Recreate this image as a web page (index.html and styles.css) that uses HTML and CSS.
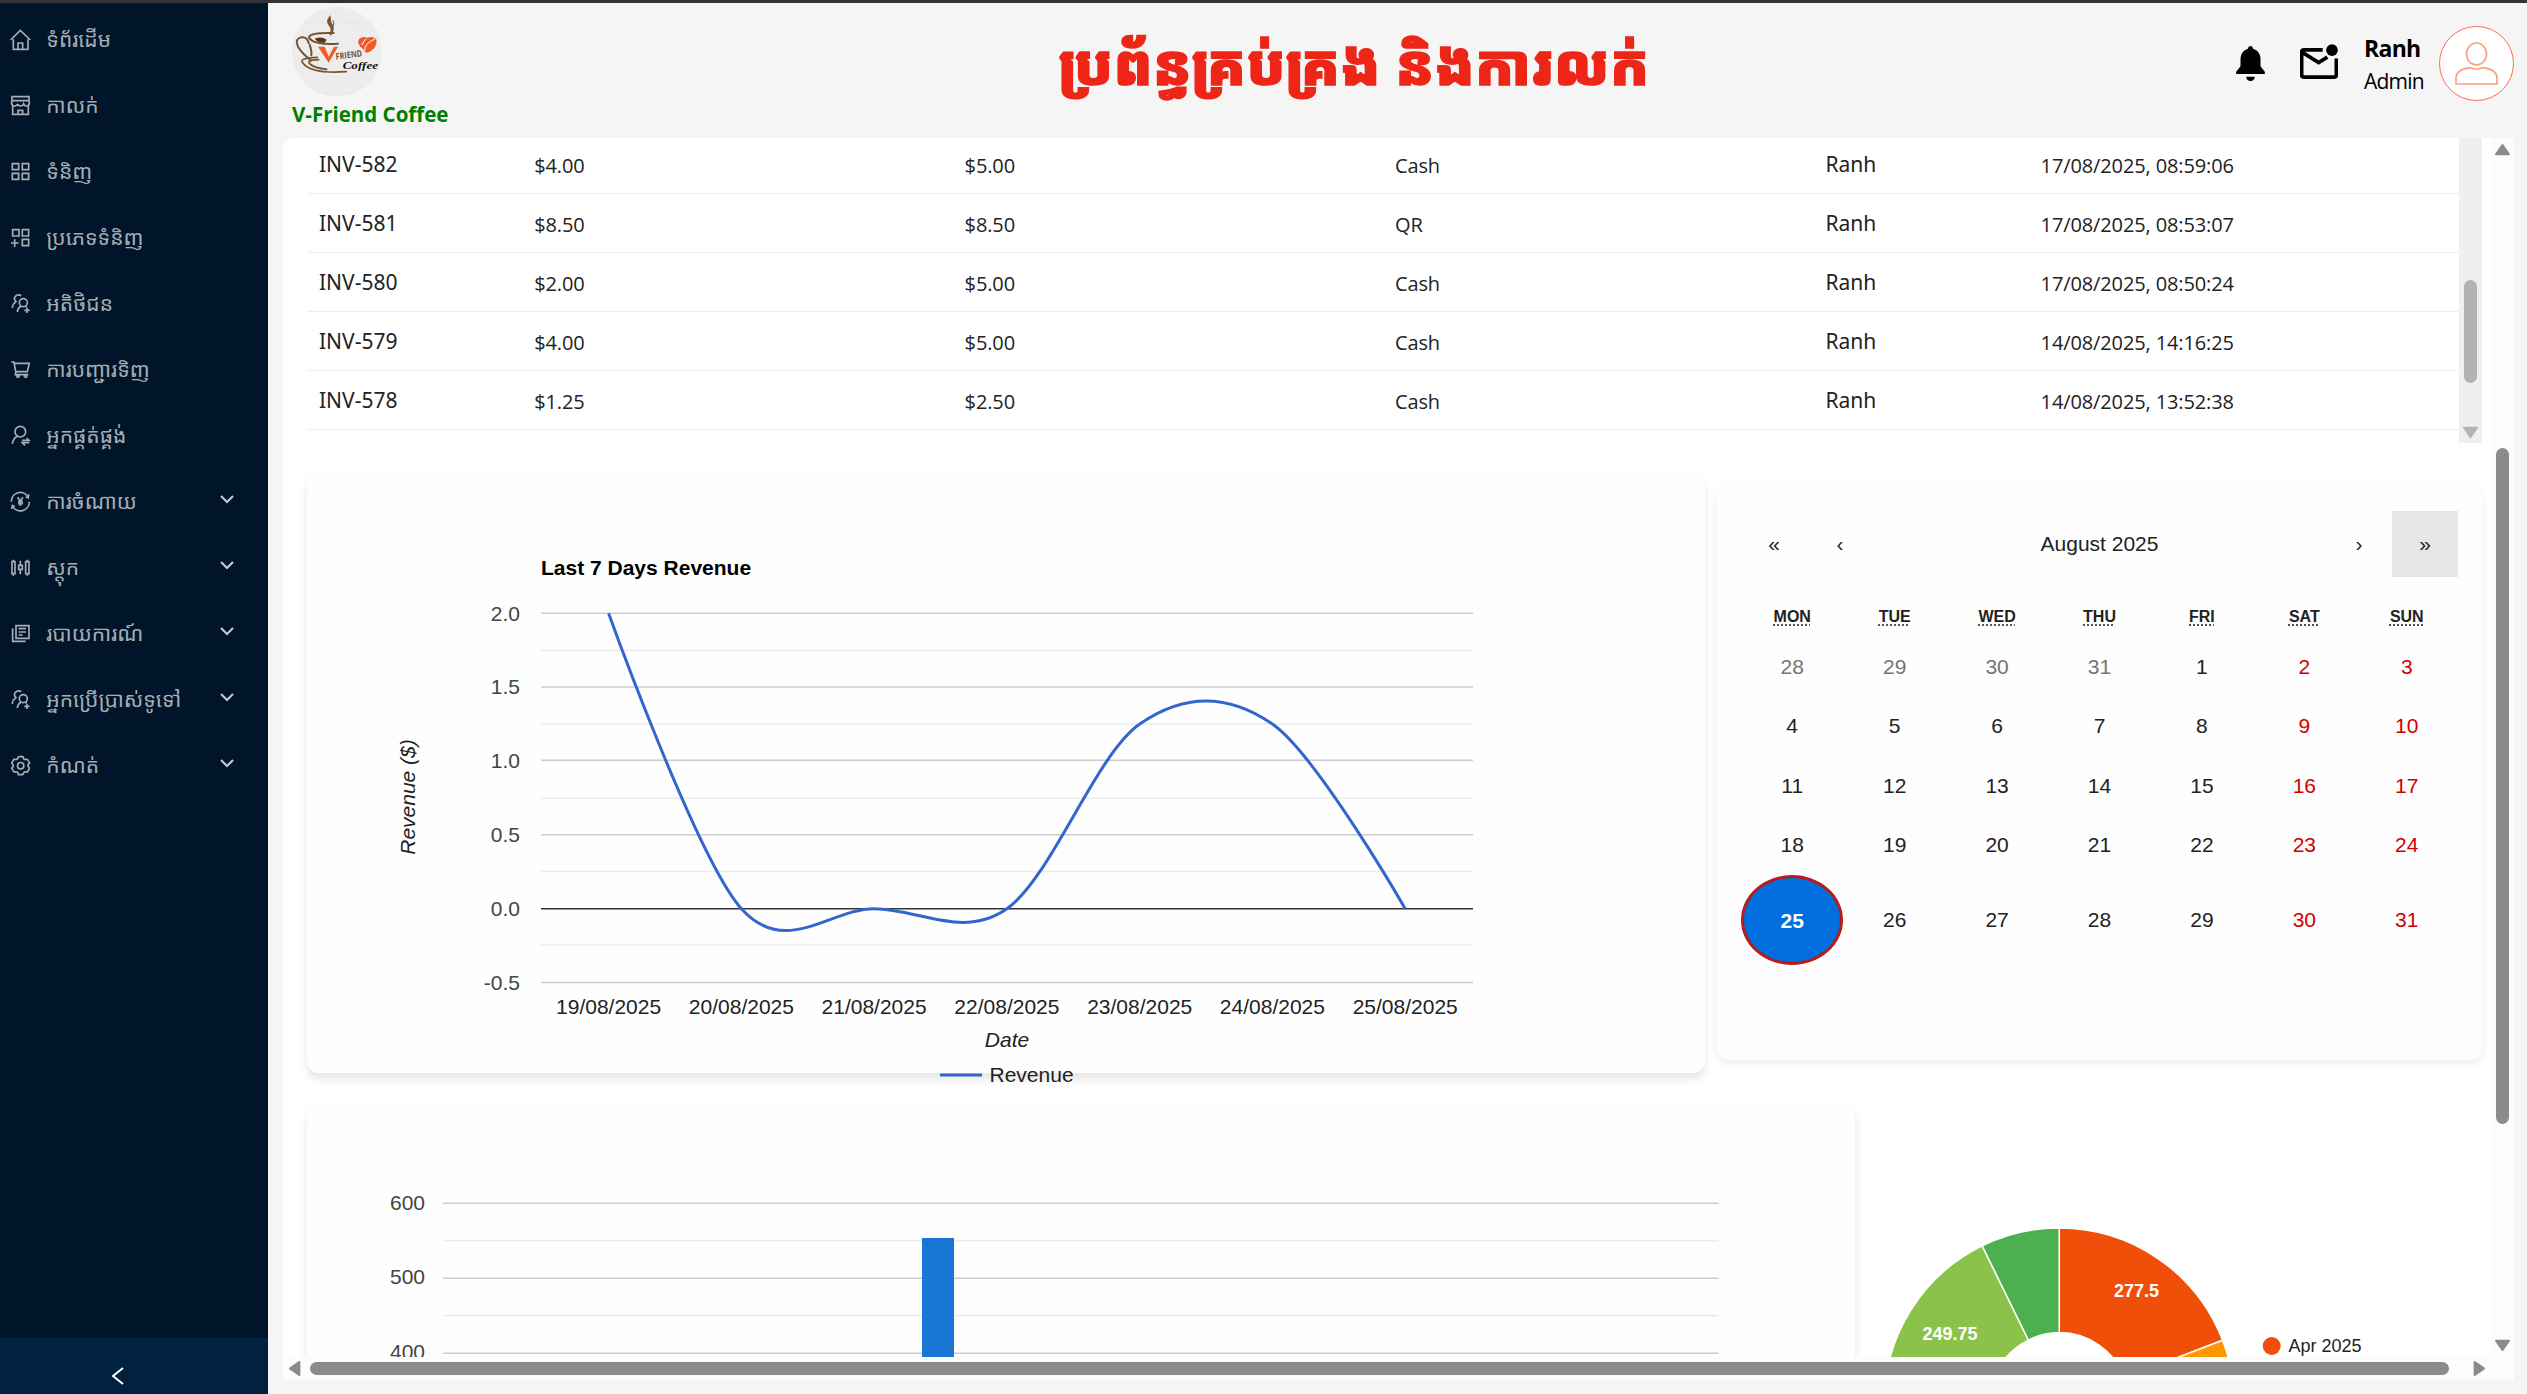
FILE: index.html
```html
<!DOCTYPE html>
<html lang="km">
<head>
<meta charset="utf-8">
<title>V-Friend Coffee</title>
<link rel="stylesheet" href="styles.css">
</head>
<body>
<svg class="defs" aria-hidden="true">
  <symbol id="users" viewBox="30 879 64 64"><circle cx="70" cy="908" r="12"/><path d="M37 924q1-13 11-19q-8-8-2-16q8-8 18-2M52 936q1-12 11-17M76 918l4 4M81 923v16M73 931h16"/></symbol>
  <symbol id="down" viewBox="0 0 14 10"><path d="M1 2l6 6 6-6"/></symbol>
  <symbol id="tooth" overflow="visible"><path d="M-6.8-27.2L6.8-27.2L8.5-21L13-18.4L20.2-19.5"/></symbol>
</svg>
<div class="topline"></div>
<div class="app">
  <aside class="sidebar">
    <nav class="menu">
      <a class="item"><svg class="icon" viewBox="30 87 64 64"><path d="M32 120L61 91l30 29M40 118v30h44v-30M54 148v-19h14v19"/></svg><span>ទំព័រដើម</span></a>
      <a class="item"><svg class="icon" viewBox="30 285 64 64"><path d="M36 290h51v12H36zM35 302v8q1 8 9 8q8 0 9-6q2 6 9 6q7 0 9-6q2 6 8 6q8 0 9-8v-8M38 318v25h47v-25M54 343v-12h14v12"/></svg><span>កាលក់</span></a>
      <a class="item"><svg class="icon" viewBox="30 483 64 64"><path d="M37 491h19v18H37zM67 491h19v18H67zM37 520h19v18H37zM67 520h19v18H67z"/></svg><span>ទំនិញ</span></a>
      <a class="item"><svg class="icon" viewBox="30 681 64 64"><path d="M38 689h19v19H38zM67 689h19v19H67zM67 718h19v19H67zM44 718v23M33 729h23"/></svg><span>ប្រភេទទំនិញ</span></a>
      <a class="item"><svg class="icon"><use href="#users"/></svg><span>អតិថិជន</span></a>
      <a class="item"><svg class="icon" viewBox="30 1078 64 64"><path d="M34 1087h8l5 29h35l6-25H44M48 1116l-2 9h39"/><circle cx="54" cy="1129" r="4"/><circle cx="77" cy="1129" r="4"/></svg><span>ការបញ្ជារទិញ</span></a>
      <a class="item"><svg class="icon" viewBox="30 75 64 64"><circle cx="61" cy="95" r="16"/><path d="M37 132q2-17 16-24M66 121h21l-7-7M88 128H67l8 8"/></svg><span>អ្នកផ្គត់ផ្គង់</span></a>
      <a class="item"><svg class="icon" viewBox="30 273 64 64"><path d="M34 305a27 27 0 0 1 51-13l2-9M88 305a27 27 0 0 1-51 13l-2 9M77 292h9M37 318h8M53 292l8 12 8-12M61 304v14M54 305h15M54 311h15"/></svg><span>ការចំណាយ</span><svg class="chev"><use href="#down"/></svg></a>
      <a class="item"><svg class="icon" viewBox="30 471 64 64"><path d="M36 485h9v36h-9zM40 479v6M40 521v6M77 485h10v36H77zM82 479v6M82 521v6M56 496h11v12H56zM61 482v14M61 508v15"/></svg><span>ស្តុក</span><svg class="chev"><use href="#down"/></svg></a>
      <a class="item"><svg class="icon" viewBox="30 669 64 64"><path d="M48 677h39v38H48zM38 685v39h39M56 686h22M56 696h22M56 705h12"/></svg><span>របាយការណ៍</span><svg class="chev"><use href="#down"/></svg></a>
      <a class="item"><svg class="icon"><use href="#users"/></svg><span>អ្នកប្រើប្រាស់ទូទៅ</span><svg class="chev"><use href="#down"/></svg></a>
      <a class="item"><svg class="icon" viewBox="-32 -32 64 64"><circle r="9.5"/><use href="#tooth"/><use href="#tooth" transform="rotate(60)"/><use href="#tooth" transform="rotate(120)"/><use href="#tooth" transform="rotate(180)"/><use href="#tooth" transform="rotate(240)"/><use href="#tooth" transform="rotate(300)"/></svg><span>កំណត់</span><svg class="chev"><use href="#down"/></svg></a>
    </nav>
    <div class="trigger"><svg viewBox="0 0 12 18"><path d="M11 1L1 9l10 8"/></svg></div>
  </aside>

  <div class="main">
    <header class="header">
      <div class="brand">
        <svg class="logo" viewBox="0 0 270 270">
          <circle cx="135" cy="135" r="135" fill="#ededed"/>
          <g fill="none" stroke="#e3e4e4" stroke-width="2"><path d="M70 20h130M35 48h200M20 80h50M180 72h80M5 110h30M5 150h30M8 180h60M120 212h125M50 236h170M90 258h90M75 22v26M150 22v26M205 48v24M45 80v30M100 212v24M165 212v24M205 180v32"/></g>
          <g fill="none" stroke="#7b5230" stroke-width="6" stroke-linecap="round">
            <path d="M116 82q8-16-4-29q-8-11 1-21q0 14 7 23q6 12-4 27"/>
            <path d="M124 58q4-8-1-18" stroke-width="3"/>
            <path d="M125 78q-66-2-73 10q-3 6 8 12M56 98q20 16 82 12"/>
            <path d="M50 108q-4-20-23-17q-20 6-9 28q10 18 40 42M58 145q2-10-5-32"/>
            <path d="M76 151q-56 2-44 16q24 34 131 27M80 158q-40 2-26 13q14 12 50 16" stroke-width="5"/>
          </g>
          <path d="M68 95q20-8 36 3l-6 9q-20 2-30-12z" fill="#54351f"/>
          <path d="M78 119h20l12 30 16-30h12l-28 48z" fill="#f15a29"/>
          <text class="logo-friend" x="132" y="158" transform="rotate(-7 132 158)" textLength="80" lengthAdjust="spacingAndGlyphs">FRIEND</text>
          <text class="logo-coffee" x="152" y="185" textLength="106" lengthAdjust="spacingAndGlyphs">Coffee</text>
          <path d="M213 126q-20-14-12-30q10-10 24-4q22-6 29 7q1 28-28 38q-8 0-13-11z" fill="#f15a29"/>
          <path d="M218 132q-2-22 31-36M210 114q4-12 12-18" stroke="#fff" stroke-width="3" fill="none"/>
        </svg>
        <div class="brand-name">V-Friend Coffee</div>
      </div>
      <h1 class="title">ប្រព័ន្ធគ្រប់គ្រង និងការលក់</h1>
      <div class="account">
        <svg class="bell" viewBox="0 0 86 106"><path d="M43 0q7 1 8 8q21 7 22 29v24l13 16v7H0v-7l13-16V37q1-22 22-29q1-7 8-8zM30 92h26q-2 13-13 13t-13-13z"/></svg>
        <svg class="mail" viewBox="0 0 114 104"><path d="M68 17H12q-7 0-7 7v68q0 7 7 7h90q7 0 7-7V43M6 24l50 31 26-16" fill="none" stroke="#000" stroke-width="11"/><circle cx="96" cy="18" r="17.500"/></svg>
        <div class="who"><b>Ranh</b><span>Admin</span></div>
        <svg class="avatar" viewBox="0 0 225 225"><circle cx="112.500" cy="112.500" r="111" fill="#fff"/><ellipse cx="112.500" cy="84" rx="30" ry="33"/><path d="M51 174v-20q2-24 43-29q18 8 37 0q41 5 43 29v20z"/></svg>
      </div>
    </header>

    <section class="panel">
      <div class="view">
        <div class="tablewrap">
          <div class="rows">
            <div class="row"><span class="n">INV-582</span><span>$4.00</span><span>$5.00</span><span>Cash</span><span class="n">Ranh</span><span>17/08/2025, 08:59:06</span></div>
            <div class="row"><span class="n">INV-581</span><span>$8.50</span><span>$8.50</span><span>QR</span><span class="n">Ranh</span><span>17/08/2025, 08:53:07</span></div>
            <div class="row"><span class="n">INV-580</span><span>$2.00</span><span>$5.00</span><span>Cash</span><span class="n">Ranh</span><span>17/08/2025, 08:50:24</span></div>
            <div class="row"><span class="n">INV-579</span><span>$4.00</span><span>$5.00</span><span>Cash</span><span class="n">Ranh</span><span>14/08/2025, 14:16:25</span></div>
            <div class="row"><span class="n">INV-578</span><span>$1.25</span><span>$2.50</span><span>Cash</span><span class="n">Ranh</span><span>14/08/2025, 13:52:38</span></div>
          </div>
          <div class="vbar light"><i class="thumb"></i><svg class="arrow" viewBox="0 0 14 11"><path d="M1 1.500h12L7 10z"/></svg></div>
        </div>

        <div class="cards">
          <div class="card line">
            <svg class="linechart" viewBox="307 472 1398 640">
              <g class="minor"><path d="M541 650.500H1473M541 724H1473M541 798H1473M541 871.500H1473M541 945H1473"/></g>
              <g class="major"><path d="M541 613.300H1473M541 687H1473M541 760.200H1473M541 834.700H1473M541 982.400H1473"/></g>
              <path class="zero" d="M541 908.700H1473"/>
              <path class="curve" d="M608.600 613.300C608.600 613.300 697.100 859.500 741.400 908.700C785.600 957.900 829.900 908.700 874.100 908.700C918.400 908.700 962.700 939.500 1006.900 908.700C1051.200 877.900 1095.400 754.900 1139.700 724.100C1183.900 693.300 1228.200 693.300 1272.400 724.100C1316.700 754.900 1405.200 908.700 1405.200 908.700"/>
              <text class="ct" x="541" y="575">Last 7 Days Revenue</text>
              <g class="yl"><text x="520" y="620.500">2.0</text><text x="520" y="694">1.5</text><text x="520" y="768">1.0</text><text x="520" y="842">0.5</text><text x="520" y="916">0.0</text><text x="520" y="990">-0.5</text></g>
              <g class="xl"><text x="608.600" y="1014">19/08/2025</text><text x="741.400" y="1014">20/08/2025</text><text x="874.100" y="1014">21/08/2025</text><text x="1006.900" y="1014">22/08/2025</text><text x="1139.700" y="1014">23/08/2025</text><text x="1272.400" y="1014">24/08/2025</text><text x="1405.200" y="1014">25/08/2025</text>
              <text class="it" x="1007" y="1047">Date</text><text class="it" transform="translate(415 797) rotate(-90)">Revenue ($)</text></g>
              <path class="key" d="M940 1075H982"/><text class="kt" x="989.500" y="1082">Revenue</text>
            </svg>
          </div>
          <div class="card cal">
            <div class="calnav"><span>«</span><span>‹</span><span class="month">August 2025</span><span>›</span><span class="hover">»</span></div>
            <div class="week"><abbr title="Monday">MON</abbr><abbr title="Tuesday">TUE</abbr><abbr title="Wednesday">WED</abbr><abbr title="Thursday">THU</abbr><abbr title="Friday">FRI</abbr><abbr title="Saturday">SAT</abbr><abbr title="Sunday">SUN</abbr></div>
            <div class="days">
              <span class="out">28</span><span class="out">29</span><span class="out">30</span><span class="out">31</span><span>1</span><span class="off">2</span><span class="off">3</span>
              <span>4</span><span>5</span><span>6</span><span>7</span><span>8</span><span class="off">9</span><span class="off">10</span>
              <span>11</span><span>12</span><span>13</span><span>14</span><span>15</span><span class="off">16</span><span class="off">17</span>
              <span>18</span><span>19</span><span>20</span><span>21</span><span>22</span><span class="off">23</span><span class="off">24</span>
              <span class="today">25</span><span>26</span><span>27</span><span>28</span><span>29</span><span class="off">30</span><span class="off">31</span>
            </div>
          </div>
        </div>

        <div class="cards second">
          <div class="card bars">
            <svg class="fill" viewBox="307 1103 1548 300">
              <g class="minor"><path d="M443 1240.500H1718.500M443 1315.500H1718.500"/></g>
              <g class="major"><path d="M443 1203.200H1718.500M443 1278.200H1718.500M443 1353.200H1718.500"/></g>
              <rect x="922" y="1238" width="32" height="165" fill="#1976d2"/>
              <g class="yl"><text x="425" y="1210">600</text><text x="425" y="1284">500</text><text x="425" y="1359">400</text></g>
            </svg>
          </div>
          <div class="donut">
            <svg class="fill" viewBox="1855 1103 627 300">
              <g class="slices">
                <path fill="#f04f0a" d="M2059.200 1228A175 175 0 0 1 2222.600 1340.300L2124.600 1377.900A70 70 0 0 0 2059.200 1332.500Z"/>
                <path fill="#ff9800" d="M2222.600 1340.300A175 175 0 0 1 2234.200 1403H2129.200A70 70 0 0 0 2124.600 1377.900Z"/>
                <path fill="#8bc34a" d="M1884.200 1403A175 175 0 0 1 1982.200 1245.800L2028.400 1340.100A70 70 0 0 0 1989.200 1403Z"/>
                <path fill="#4caf50" d="M1982.200 1245.800A175 175 0 0 1 2059.200 1228V1332.500A70 70 0 0 0 2028.400 1340.100Z"/>
              </g>
              <text class="sl" x="2136.500" y="1297">277.5</text><text class="sl" x="1950" y="1340">249.75</text>
              <circle cx="2271.700" cy="1346" r="9" fill="#f04f0a"/><text class="dl" x="2288.500" y="1352">Apr 2025</text>
            </svg>
          </div>
        </div>
      </div>
      <div class="vbar"><svg class="arrow" viewBox="0 0 14 11"><path d="M1 9.500h12L7 1z"/></svg><i class="thumb"></i><svg class="arrow" viewBox="0 0 14 11"><path d="M1 1.500h12L7 10z"/></svg></div>
      <div class="hbar"><svg class="arrow" viewBox="0 0 11 14"><path d="M9.500 1v12L1 7z"/></svg><i class="thumb"></i><svg class="arrow" viewBox="0 0 11 14"><path d="M1.500 1v12L10 7z"/></svg></div>
    </section>
  </div>
</div>
</body>
</html>
```
FILE: styles.css
```css
* { box-sizing: border-box; }
html, body { margin: 0; height: 1394px; overflow: hidden; }
body { background: #f5f5f5; font-family: "Open Sans", "Noto Sans", sans-serif; color: #000; }
.defs { display: none; }
.topline { height: 3px; background: #333238; }
.app { display: flex; height: 1391px; }

.sidebar { width: 268px; background: #001529; display: flex; flex-direction: column; overflow: hidden; }
.menu { display: flex; flex-direction: column; padding-top: 4px; flex: 1; }
.item { height: 66px; flex: none; display: flex; align-items: center; padding: 0 34px 0 10px; color: #a6adb4; font: 21px/30px "Noto Sans Khmer", "Noto Sans", sans-serif; white-space: nowrap; }
.item span { margin-left: 15px; flex: 1; padding-bottom: 2px; }
.icon { width: 21.300px; height: 21.300px; flex: none; fill: none; stroke: #a6adb4; stroke-width: 5; }
.chev { width: 14px; height: 10px; fill: none; stroke: #c3c8cc; stroke-width: 2.200; margin-bottom: 6px; }
.trigger { height: 56px; flex: none; background: #002140; display: flex; justify-content: center; padding: 29px 32px 0 0; }
.trigger svg { width: 12px; height: 18px; fill: none; stroke: #fff; stroke-width: 2; }

.main { flex: 1; display: flex; flex-direction: column; padding: 0 13px 14px 15px; }
.header { height: 135px; display: grid; grid-template-columns: 776px 590px 1fr; }
.brand { padding: 4px 0 0 9px; }
.logo { width: 90px; height: 90px; display: block; }
.brand-name { font-weight: 700; font-size: 20.500px; line-height: 30px; margin-top: 2px; color: #008000; white-space: nowrap; }
.title { margin: 0; padding-top: 18px; font: 900 56px/84px "Khmer OS Muol", "Noto Sans Khmer", "Noto Sans", sans-serif; color: #ed2618; white-space: nowrap; text-align: center; -webkit-text-stroke: 1.500px #ed2618; }
.account { display: flex; justify-content: flex-end; align-items: flex-start; padding-top: 23px; }
.bell { width: 29px; height: 35.300px; margin: 20px 35px 0 0; }
.mail { width: 38px; height: 35px; margin: 18px 26px 0 0; }
.who { width: 75px; display: flex; flex-direction: column; line-height: 32px; padding-top: 5px; }
.who b { font-size: 23px; letter-spacing: -.7px; line-height: 34px; }
.who span { font-size: 21px; letter-spacing: -.8px; }
.avatar { width: 75px; height: 75px; fill: none; stroke: #f9a183; stroke-width: 5; }
.avatar circle { stroke: #fb6f43; stroke-width: 3; }

.panel { height: 1242px; display: grid; grid-template: 1219px 23px / 2208px 23px; background: #fff; border-radius: 12px 0 0 0; }
.view { overflow: hidden; padding: 0 9px 0 24px; }
.tablewrap { height: 305px; display: flex; overflow: hidden; }
.rows { flex: 1; margin-top: -3px; }
.row { height: 59px; border-bottom: 1px solid #eee; display: grid; grid-template-columns: 1fr 2fr 2fr 2fr 1fr 2fr; align-items: center; color: #222; font-size: 20px; letter-spacing: -.12px; }
.row span { padding: 2px 0 0 12px; }
.row .n { font: 21px/30px "Noto Sans", sans-serif; letter-spacing: 0; padding-top: 0; }

.vbar { background: #fcfcfc; display: flex; flex-direction: column; align-items: center; padding: 6px 0; }
.vbar .arrow { width: 15px; height: 12px; }
.vbar .thumb { width: 13px; height: 676px; margin: 292px 0 215px; border-radius: 7px; background: #8b8b8b; }
.arrow { flex: none; fill: #8b8b8b; stroke: #8b8b8b; stroke-width: 2; stroke-linejoin: round; }
.vbar.light { width: 23px; background: #efefef; padding: 0; }
.light .thumb { height: 103px; margin: 142px 0 43px; background: #b3b3b3; }
.light .arrow { fill: #b3b3b3; stroke: #b3b3b3; }
.hbar { grid-column: 1 / 3; background: #fcfcfc; display: flex; align-items: center; padding-left: 6px; }
.hbar .arrow { width: 12px; height: 15px; }
.hbar .thumb { width: 2139px; height: 13px; margin: 0 24px 0 9px; border-radius: 7px; background: #8b8b8b; }

.cards { display: flex; margin-top: 29px; gap: 12px; }
.card { border-radius: 12px; background: #fefefe; box-shadow: 0 6px 9px rgba(0,0,0,.1); }
.line { width: 1398px; height: 601px; }
.linechart { display: block; width: 1398px; height: 640px; position: relative; z-index: 1; }
.cal { width: 765px; height: 574px; margin-top: 14px; padding: 25px 24px 0; box-shadow: 0 3px 9px rgba(0,0,0,.08); font-family: "Liberation Sans", Arial, sans-serif; color: #222; }
.second { gap: 0; margin-top: 30px; }
.bars { width: 1548px; height: 300px; flex: none; }
.donut { width: 627px; height: 300px; }
.fill { display: block; width: 100%; height: 100%; }

svg text { font-family: "Liberation Sans", Arial, sans-serif; font-size: 21px; fill: #222; }
svg text.logo-friend { font: bold 27px "Open Sans", sans-serif; fill: #7b5230; }
svg text.logo-coffee { font: italic bold 34px "Liberation Serif", serif; fill: #111; }
.minor path { stroke: #ebebeb; stroke-width: 1.500; }
.major path { stroke: #ccc; stroke-width: 1.500; }
.zero { stroke: #333; stroke-width: 1.500; }
.curve { fill: none; stroke: #3366cc; stroke-width: 3; }
.key { stroke: #3366cc; stroke-width: 3; }
svg text.ct { font-weight: 700; fill: #000; }
.yl { text-anchor: end; }
.yl text { fill: #444; }
.xl { text-anchor: middle; }
.it { font-style: italic; }
.slices path { stroke: #fff; stroke-width: 1.500; }
svg text.sl { font-size: 18px; font-weight: 700; fill: #fff; text-anchor: middle; }
svg text.dl { font-size: 18px; }

.calnav { display: flex; height: 66px; font-size: 21px; line-height: 66px; text-align: center; }
.calnav span { width: 66px; }
.calnav .month { flex: 1; }
.calnav .hover { background: #e6e6e6; }
.week { display: grid; grid-template-columns: repeat(7, 1fr); justify-items: center; height: 60px; padding-top: 29px; font-size: 16px; line-height: 22px; font-weight: 700; }
.week abbr { text-decoration: underline dotted; text-decoration-skip-ink: none; text-underline-offset: 3px; }
.days { display: grid; grid-template-columns: repeat(7, 1fr); grid-template-rows: repeat(4, 59.500px) 90px; text-align: center; align-items: center; font-size: 21px; }
.out { color: #757575; }
.off { color: #d10000; }
.today { height: 90px; line-height: 86px; border-radius: 50%; border: 3px solid #b71c1c; background: #006edc; color: #fff; font-weight: 700; }
```
